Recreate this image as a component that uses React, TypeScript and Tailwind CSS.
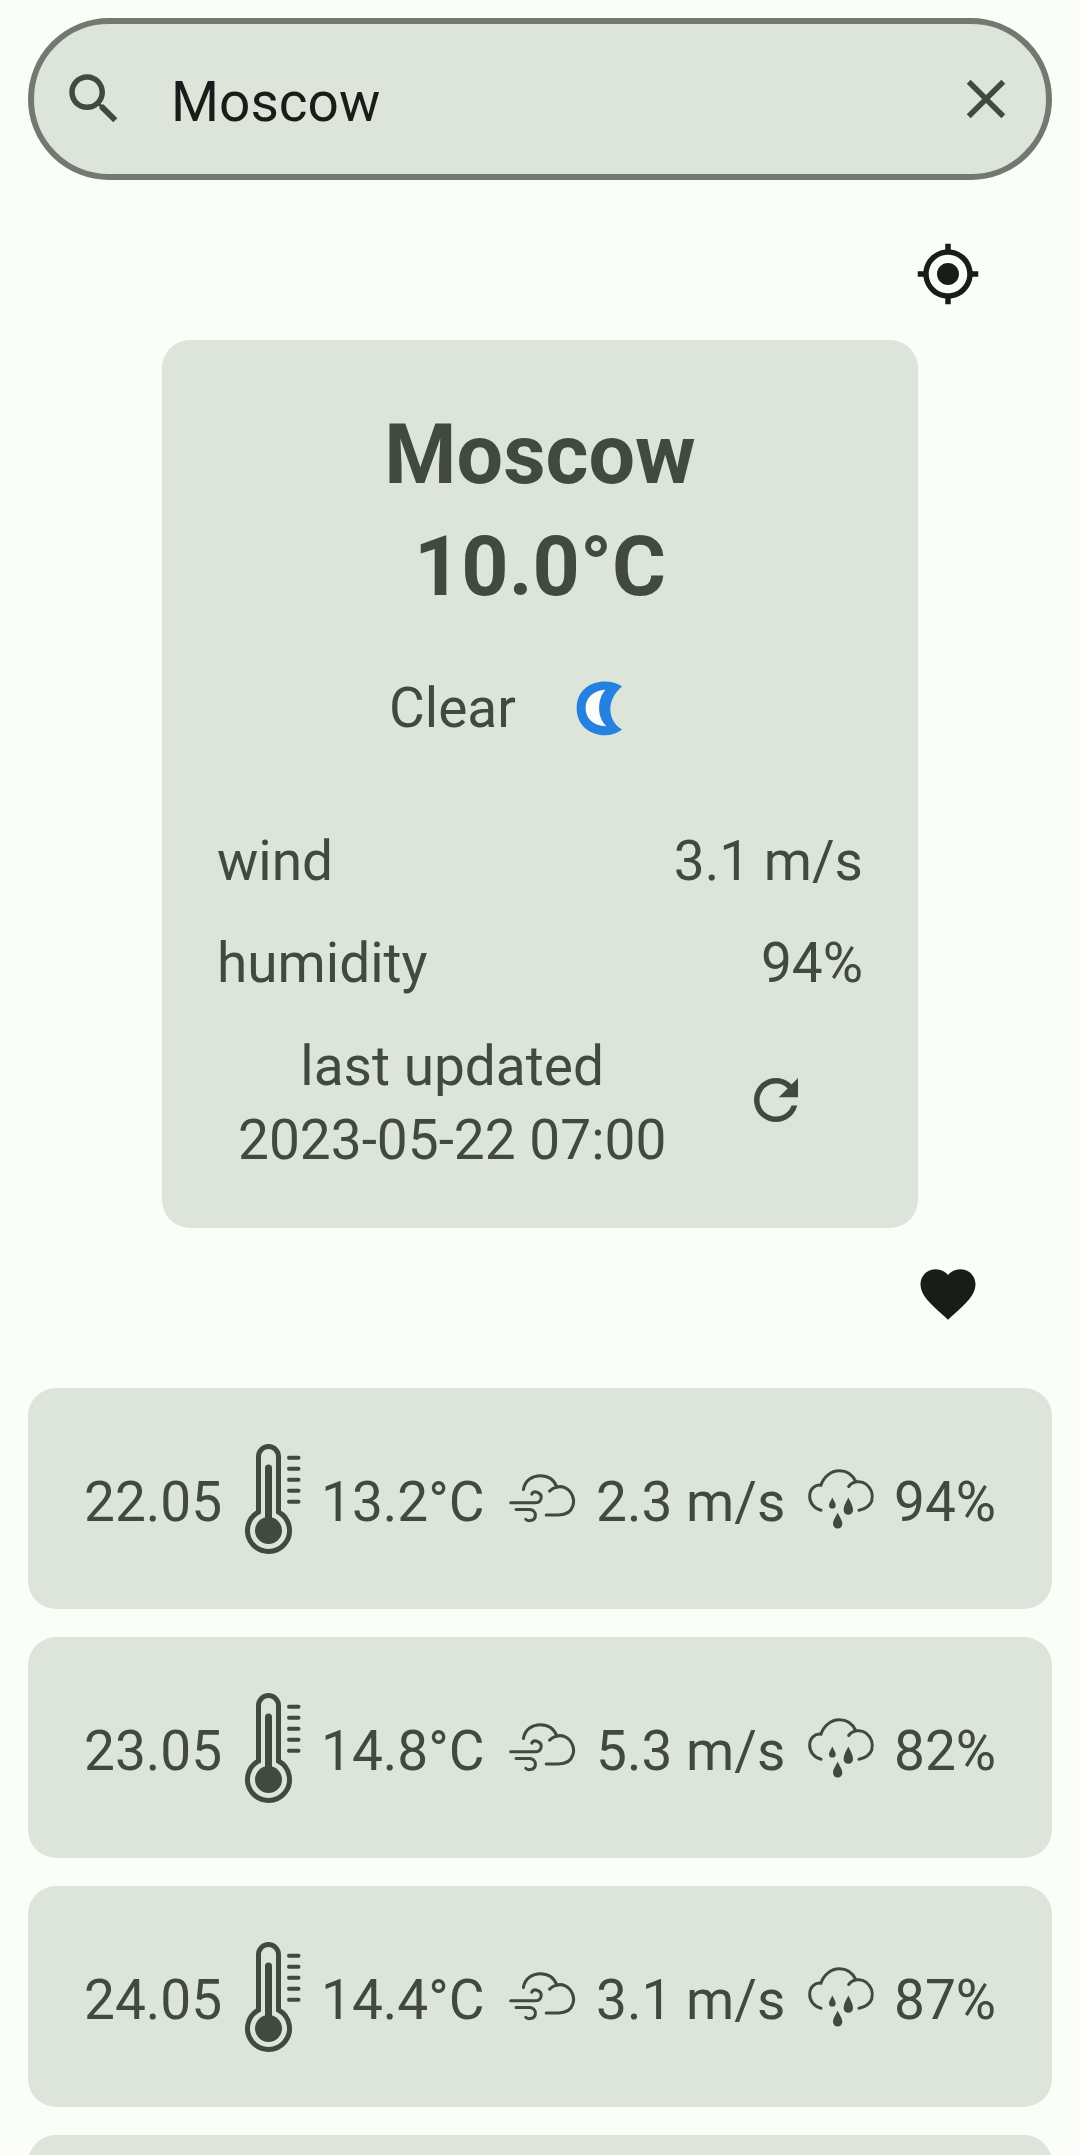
import React from 'react';

const forecast = [
  { date: '22.05', temp: '13.2°C', wind: '2.3 m/s', humidity: '94%' },
  { date: '23.05', temp: '14.8°C', wind: '5.3 m/s', humidity: '82%' },
  { date: '24.05', temp: '14.4°C', wind: '3.1 m/s', humidity: '87%' },
];

const MaterialIcon = ({ d, className }: { d: string; className: string }) => (
  <svg viewBox="0 0 24 24" fill="currentColor" className={className}>
    <path d={d} />
  </svg>
);

const ThermometerIcon = () => (
  <svg viewBox="0 0 56 110" className="w-[56px] h-[110px] shrink-0" fill="none" stroke="#424940">
    <path strokeWidth="5" d="M13.5 68V12.5a10 10 0 0 1 20 0V68a21 21 0 1 1-20 0z" />
    <circle cx="23.5" cy="86.5" r="13.5" fill="#424940" stroke="none" />
    <path strokeWidth="7" strokeLinecap="round" d="M23.5 24V80" />
    <path strokeWidth="4" strokeLinecap="round" d="M44 13.7H53.5M44 24.7H53.5M44 35.7H53.5M44 46.7H53.5M44 57.7H53.5" />
  </svg>
);

const WindCloudIcon = () => (
  <svg viewBox="84 161 206 152" className="w-[69px] h-[51px] shrink-0" fill="none" stroke="#424940" strokeWidth="9" strokeLinecap="round">
    <path d="M130 210C135 182 158 169 180 169C205 169 222 182 230 203" />
    <path d="M208 215C220 202 240 198 255 205C275 215 284 240 278 258C272 278 255 286 235 286H198" />
    <path d="M92 250H165C185 250 190 226 172 219C165 216 158 218 155 224" />
    <path d="M108 270H150C170 272 172 300 150 303C144 304 139 302 137 299" />
  </svg>
);

const RainCloudIcon = () => (
  <svg viewBox="978 144 204 185" className="w-[68px] h-[62px] shrink-0" fill="none" stroke="#424940" strokeWidth="9" strokeLinecap="round">
    <path d="M1020 270C998 265 986 247 986 228C986 207 1003 192 1020 195C1028 170 1050 152 1075 152C1098 152 1115 165 1124 184" />
    <path d="M1103 199C1115 183 1140 180 1155 192C1172 205 1177 225 1172 243C1166 258 1151 267 1134 270" />
    <path stroke="none" fill="#424940" d="M1054 232C1060 244 1064 250 1064 255A10 10 0 0 1 1044 255C1044 250 1048 244 1054 232Z" />
    <path stroke="none" fill="#424940" d="M1102 232C1110 248 1116 257 1116 270A14 14 0 0 1 1088 270C1088 257 1094 248 1102 232Z" />
    <path stroke="none" fill="#424940" d="M1070 278C1078 294 1084 301 1084 311A14 14 0 0 1 1056 311C1056 301 1062 294 1070 278Z" />
  </svg>
);

const MoonIcon = () => (
  <svg viewBox="700 102 154 186" className="w-[51px] h-[62px] shrink-0">
    <path fill="#2481e0" d="M845 130C800 98 708 115 708 195C708 275 800 297 845 260C800 235 796 170 845 130Z" />
    <path fill="#fbfdf8" d="M795 140C757 142 735 165 735 195C735 225 757 250 798 250C770 225 768 170 795 140Z" />
  </svg>
);

const App: React.FC = () => {
  return (
    <div className="h-screen overflow-hidden bg-[#fbfdf8] [font-family:Roboto,sans-serif] text-[#424940]">
      <div className="mx-[28px] mt-[18px] h-[162px] rounded-full border-[6px] border-[#727970] bg-[#dde5da] flex items-center">
        <MaterialIcon
          className="w-[66px] h-[66px] ml-[27px] text-[#424940] shrink-0"
          d="M15.5 14h-.79l-.28-.27C15.41 12.59 16 11.11 16 9.5 16 5.91 13.09 3 9.5 3S3 5.91 3 9.5 5.91 16 9.5 16c1.61 0 3.09-.59 4.23-1.57l.27.28v.79l5 4.99L20.49 19l-4.99-5zm-6 0C7.01 14 5 11.99 5 9.5S7.01 5 9.5 5 14 7.01 14 9.5 11.99 14 9.5 14z"
        />
        <div className="ml-[44px] mt-[6px] flex-1 text-[55px] leading-[74px] text-[#191c19]">Moscow</div>
        <MaterialIcon
          className="w-[66px] h-[66px] mr-[27px] text-[#424940] shrink-0"
          d="M19 6.41 17.59 5 12 10.59 6.41 5 5 6.41 10.59 12 5 17.59 6.41 19 12 13.41 17.59 19 19 17.59 13.41 12z"
        />
      </div>

      <div className="flex justify-end pr-[99px] pt-[61px] pb-[33px]">
        <MaterialIcon
          className="w-[66px] h-[66px] text-[#191c19]"
          d="M12 8c-2.21 0-4 1.79-4 4s1.79 4 4 4 4-1.79 4-4-1.79-4-4-4zm8.94 3c-.46-4.17-3.77-7.48-7.94-7.94V1h-2v2.06C6.83 3.52 3.52 6.83 3.06 11H1v2h2.06c.46 4.17 3.77 7.48 7.94 7.94V23h2v-2.06c4.17-.46 7.48-3.77 7.94-7.94H23v-2h-2.06zM12 19c-3.87 0-7-3.13-7-7s3.13-7 7-7 7 3.13 7 7-3.13 7-7 7z"
        />
      </div>

      <div className="mx-auto w-[756px] rounded-[28px] bg-[#dde5da] px-[55px] pt-[59px] pb-[51px]">
        <div className="text-center text-[82.5px] leading-[112px] font-bold">Moscow</div>
        <div className="text-center text-[82.5px] leading-[112px] font-bold">10.0°C</div>

        <div className="mt-[48px] ml-[172px] flex items-center gap-[58px] text-[55px] leading-[74px]">
          <span>Clear</span>
          <MoonIcon />
        </div>

        <div className="mt-[79px] flex justify-between text-[55px] leading-[74px]">
          <span>wind</span>
          <span>3.1 m/s</span>
        </div>
        <div className="mt-[28px] flex justify-between text-[55px] leading-[74px]">
          <span>humidity</span>
          <span>94%</span>
        </div>
        <div className="mt-[29px] ml-[21px] flex items-center gap-[77px] text-[55px] leading-[74px]">
          <div className="text-center">
            <div>last updated</div>
            <div>2023-05-22 07:00</div>
          </div>
          <MaterialIcon
            className="w-[66px] h-[66px] shrink-0 -mt-[6px]"
            d="M17.65 6.35C16.2 4.9 14.21 4 12 4c-4.42 0-7.99 3.58-7.99 8s3.57 8 7.99 8c3.73 0 6.84-2.55 7.73-6h-2.08c-.82 2.33-3.04 4-5.65 4-3.31 0-6-2.69-6-6s2.69-6 6-6c1.66 0 3.14.69 4.22 1.78L13 11h7V4l-2.35 2.35z"
          />
        </div>
      </div>

      <div className="flex justify-end pr-[99px] pt-[33px] pb-[61px]">
        <MaterialIcon
          className="w-[66px] h-[66px] text-[#191c19]"
          d="M12 21.35l-1.45-1.32C5.4 15.36 2 12.28 2 8.5 2 5.42 4.42 3 7.5 3c1.74 0 3.41.81 4.5 2.09C13.09 3.81 14.76 3 16.5 3 19.58 3 22 5.42 22 8.5c0 3.78-3.4 6.86-8.55 11.54L12 21.35z"
        />
      </div>

      <div className="mx-[28px] flex flex-col gap-[28px]">
        {forecast.map((day) => (
          <div key={day.date} className="h-[221px] rounded-[28px] bg-[#dde5da] pl-[56px] flex items-center whitespace-nowrap text-[55px] leading-[74px]">
            <span className="w-[137px] mt-[6px]">{day.date}</span>
            <span className="ml-[24px]"><ThermometerIcon /></span>
            <span className="ml-[20px] w-[163px] mt-[6px]">{day.temp}</span>
            <span className="ml-[24px]"><WindCloudIcon /></span>
            <span className="ml-[19px] w-[188px] mt-[6px]">{day.wind}</span>
            <span className="ml-[23px]"><RainCloudIcon /></span>
            <span className="ml-[19px] mt-[6px]">{day.humidity}</span>
          </div>
        ))}
        <div className="h-[221px] rounded-[28px] bg-[#dde5da]" />
      </div>
    </div>
  );
};

export default App;
